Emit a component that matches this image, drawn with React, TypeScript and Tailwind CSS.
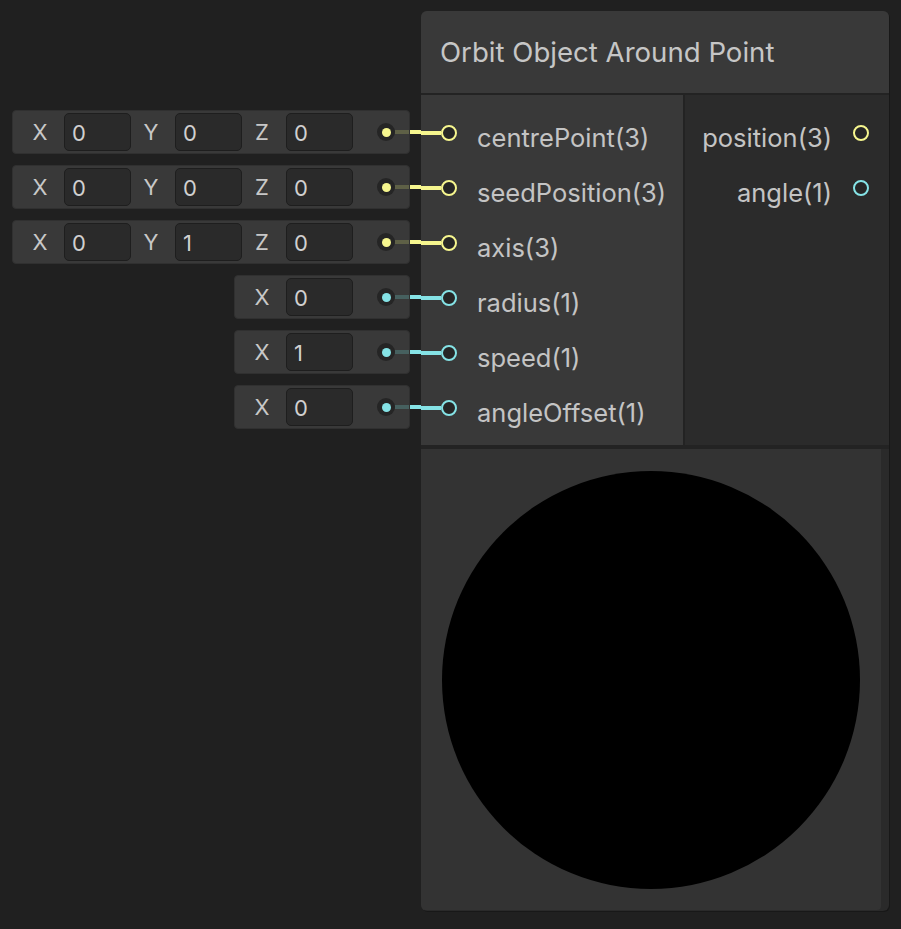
const YELLOW = '#f6f68e'
const CYAN = '#85e3e6'

type Input = { name: string; color: string; dim: string; values: [string, string][] }

const inputs: Input[] = [
  { name: 'centrePoint(3)', color: YELLOW, dim: '#5e6046', values: [['X', '0'], ['Y', '0'], ['Z', '0']] },
  { name: 'seedPosition(3)', color: YELLOW, dim: '#5e6046', values: [['X', '0'], ['Y', '0'], ['Z', '0']] },
  { name: 'axis(3)', color: YELLOW, dim: '#5e6046', values: [['X', '0'], ['Y', '1'], ['Z', '0']] },
  { name: 'radius(1)', color: CYAN, dim: '#46605f', values: [['X', '0']] },
  { name: 'speed(1)', color: CYAN, dim: '#46605f', values: [['X', '1']] },
  { name: 'angleOffset(1)', color: CYAN, dim: '#46605f', values: [['X', '0']] },
]

const outputs = [
  { name: 'position(3)', color: YELLOW },
  { name: 'angle(1)', color: CYAN },
]

function Port({ color }: { color: string }) {
  return (
    <div
      className="w-[16px] h-[16px] rounded-full border-2 bg-[#262626] shrink-0"
      style={{ borderColor: color }}
    />
  )
}

function InputWidget({ input }: { input: Input }) {
  return (
    <div className="flex items-center">
      <div className="h-[44px] rounded-[4px] bg-[#393939] border border-[#303030] pl-[15px] flex items-center">
        <div className="flex items-center gap-[8px]">
          {input.values.map(([axis, v]) => (
            <div key={axis} className="flex items-center gap-[12px]">
              <span className="w-[24px] text-center text-[22px] text-[#c8c8c8]">{axis}</span>
              <div className="w-[67px] h-[38px] rounded-[5px] bg-[#2a2a2a] border border-[#1e1e1e] pl-[7px] pt-[2px] flex items-center text-[22px] text-[#d0d0d0]">
                {v}
              </div>
            </div>
          ))}
        </div>
        <div className="ml-[24px] w-[18px] h-[18px] rounded-full bg-[#252525] flex items-center justify-center">
          <div className="w-[9px] h-[9px] rounded-full" style={{ backgroundColor: input.color }} />
        </div>
        <div className="w-[14px] h-[4px]" style={{ backgroundColor: input.dim }} />
      </div>
      <div className="w-[11px] h-[4px]" style={{ backgroundColor: input.color }} />
    </div>
  )
}

export default function App() {
  return (
    <div
      className="w-[901px] h-[929px] bg-[#202020] flex pt-[11px]"
      style={{ fontFamily: 'Inter, "Noto Sans", sans-serif' }}
    >
      <div className="w-[421px] flex flex-col items-end pt-[99px] gap-[11px]">
        {inputs.map((i) => (
          <InputWidget key={i.name} input={i} />
        ))}
      </div>

      <div className="w-[468px] h-[900px] rounded-[6px] bg-[#2a2a2a] flex flex-col overflow-hidden shadow-[1px_1px_0_#181818]">
        <div className="h-[82px] bg-[#393939] pl-[19px] pt-[2px] flex items-center text-[27.6px] text-[#c6c6c6]">
          Orbit Object Around Point
        </div>
        <div className="h-[2px] bg-[#232323]" />
        <div className="h-[350px] flex">
          <div className="w-[262px] bg-[#393939] pt-[10px]">
            {inputs.map((i) => (
              <div key={i.name} className="h-[55px] flex items-center">
                <div className="w-[20px] h-[4px]" style={{ backgroundColor: i.color }} />
                <Port color={i.color} />
                <span className="ml-[20px] pt-[11px] text-[25.5px] text-[#c4c4c4]">{i.name}</span>
              </div>
            ))}
          </div>
          <div className="w-[2px] bg-[#232323]" />
          <div className="flex-1 bg-[#2b2b2b] pt-[10px]">
            {outputs.map((o) => (
              <div key={o.name} className="h-[55px] flex items-center justify-end pr-[20px]">
                <span className="pt-[11px] text-[25.5px] text-[#c4c4c4]">{o.name}</span>
                <div className="ml-[21px]">
                  <Port color={o.color} />
                </div>
              </div>
            ))}
          </div>
        </div>
        <div className="h-[4px] bg-[#232323]" />
        <div className="w-[460px] h-[461px] bg-[#333333] rounded-b-[4px] flex items-center justify-center">
          <div className="w-[418px] h-[418px] rounded-full bg-black" />
        </div>
      </div>
    </div>
  )
}
